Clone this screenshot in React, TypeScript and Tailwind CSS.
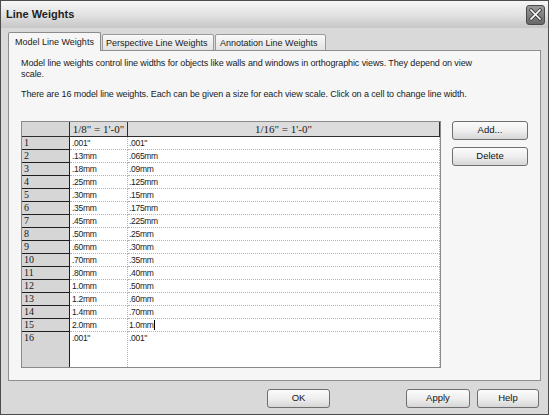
import React from 'react';

const rows: [string, string][] = [
  ['.001"', '.001"'],
  ['.13mm', '.065mm'],
  ['.18mm', '.09mm'],
  ['.25mm', '.125mm'],
  ['.30mm', '.15mm'],
  ['.35mm', '.175mm'],
  ['.45mm', '.225mm'],
  ['.50mm', '.25mm'],
  ['.60mm', '.30mm'],
  ['.70mm', '.35mm'],
  ['.80mm', '.40mm'],
  ['1.0mm', '.50mm'],
  ['1.2mm', '.60mm'],
  ['1.4mm', '.70mm'],
  ['2.0mm', '1.0mm'],
  ['.001"', '.001"'],
];

const btn =
  "h-[19px] rounded-[3px] border border-[#6f6f6f] bg-gradient-to-b from-[#fbfbfb] via-[#efefef] to-[#d6d6d6] text-[9.5px] text-[#111] flex items-center justify-center";

const App: React.FC = () => {
  return (
    <div className="w-[549px] h-[415px] flex flex-col border border-[#4d4d4d] bg-[#d9d9d9] font-['Liberation_Sans',Arial,sans-serif] text-[#1a1a1a] overflow-hidden">
      {/* title bar */}
      <div className="h-[27px] flex items-center pl-[5px] pr-[3px] bg-gradient-to-b from-[#f6f6f6] via-[#e3e3e3] to-[#c6c6c6]">
        <span className="text-[11px] font-bold text-[#222]">Line Weights</span>
        <div className="ml-auto w-[19px] h-[20px] rounded-[3px] border border-[#4a4a4a] bg-gradient-to-b from-[#9a9a9a] to-[#686868] flex items-center justify-center">
          <svg width="13" height="13" viewBox="0 0 13 13">
            <path d="M2 2 L11 11 M11 2 L2 11" stroke="#3a3a3a" strokeWidth="3.2" strokeLinecap="square" />
            <path d="M2 2 L11 11 M11 2 L2 11" stroke="#ffffff" strokeWidth="1.6" strokeLinecap="square" />
          </svg>
        </div>
      </div>

      <div className="flex-1 px-[7px] pt-[4px] flex flex-col">
        {/* tabs */}
        <div className="h-[19px] flex items-end text-[9px]">
          <div className="relative z-10 w-[93px] h-[19px] border border-b-0 border-[#8a8a8a] bg-[#f6f6f6] pl-[6px] pt-[3px] rounded-t-[2px]">
            Model Line Weights
          </div>
          <div className="w-[112px] h-[17px] ml-[1px] border border-[#9a9a9a] bg-gradient-to-b from-[#fafafa] to-[#e2e2e2] pl-[3px] pt-[2px] rounded-t-[2px]">
            Perspective Line Weights
          </div>
          <div className="w-[111px] h-[17px] ml-[1px] border border-[#9a9a9a] bg-gradient-to-b from-[#fafafa] to-[#e2e2e2] pl-[4px] pt-[2px] rounded-t-[2px]">
            Annotation Line Weights
          </div>
        </div>

        {/* panel */}
        <div className="h-[331px] -mt-px border border-[#8f8f8f] bg-[#f6f6f6] pl-[12px] pt-[7px]">
          <p className="text-[9px] leading-[11px] tracking-[-0.1px] w-[470px]">
            Model line weights control line widths for objects like walls and windows in orthographic views. They depend on view scale.
          </p>
          <p className="text-[9px] leading-[11px] tracking-[-0.1px] mt-[9px] whitespace-nowrap">
            There are 16 model line weights. Each can be given a size for each view scale. Click on a cell to change line width.
          </p>

          <div className="flex mt-[21px]">
            {/* table */}
            <div className="w-[420px] h-[247px] border border-[#8a8a8a] bg-white flex flex-col">
              <div className="h-[15px] flex font-['Liberation_Serif',serif] text-[11px] leading-[14px]">
                <div className="w-[48px] bg-[#d6d6d6] border-r border-b border-[#2e2e2e]" />
                <div className="w-[58px] bg-[#dcdcdc] border-r border-b border-[#2e2e2e] text-center">1/8" = 1'-0"</div>
                <div className="flex-1 bg-[#dcdcdc] border-r border-b border-[#2e2e2e] text-center">1/16" = 1'-0"</div>
              </div>
              {rows.map((r, i) => {
                const last = i === rows.length - 1;
                return (
                  <div key={i} className={last ? "flex-1 flex" : "h-[13px] flex"}>
                    <div
                      className={
                        "w-[48px] bg-[#d6d6d6] border-r border-[#1e1e1e] pl-[2px] font-['Liberation_Serif',serif] text-[10px] leading-[12px] " +
                        (last ? "" : "border-b")
                      }
                    >
                      {i + 1}
                    </div>
                    <div
                      className={
                        "w-[58px] border-r border-dotted border-[#b4b4b4] pl-[2px] text-[8.5px] leading-[12px] tracking-[-0.3px] " +
                        (last ? "" : "border-b")
                      }
                    >
                      {r[0]}
                    </div>
                    <div
                      className={
                        "flex-1 border-r border-dotted border-[#b4b4b4] pl-[1px] text-[8.5px] leading-[12px] tracking-[-0.3px] flex items-start " +
                        (last ? "" : "border-b")
                      }
                    >
                      {r[1]}
                      {i === 14 && <span className="inline-block w-px h-[10px] bg-black ml-[1px] mt-[1px]" />}
                    </div>
                  </div>
                );
              })}
            </div>

            {/* side buttons */}
            <div className="ml-[11px] flex flex-col gap-[7px]">
              <div className={btn + " w-[76px]"}>Add...</div>
              <div className={btn + " w-[76px]"}>Delete</div>
            </div>
          </div>
        </div>

        {/* bottom buttons */}
        <div className="mt-[8px] flex">
          <div className={btn + " w-[63px] ml-[259px]"}>OK</div>
          <div className={btn + " w-[64px] ml-[76px]"}>Apply</div>
          <div className={btn + " w-[62px] ml-[7px]"}>Help</div>
        </div>
      </div>
    </div>
  );
};

export default App;
